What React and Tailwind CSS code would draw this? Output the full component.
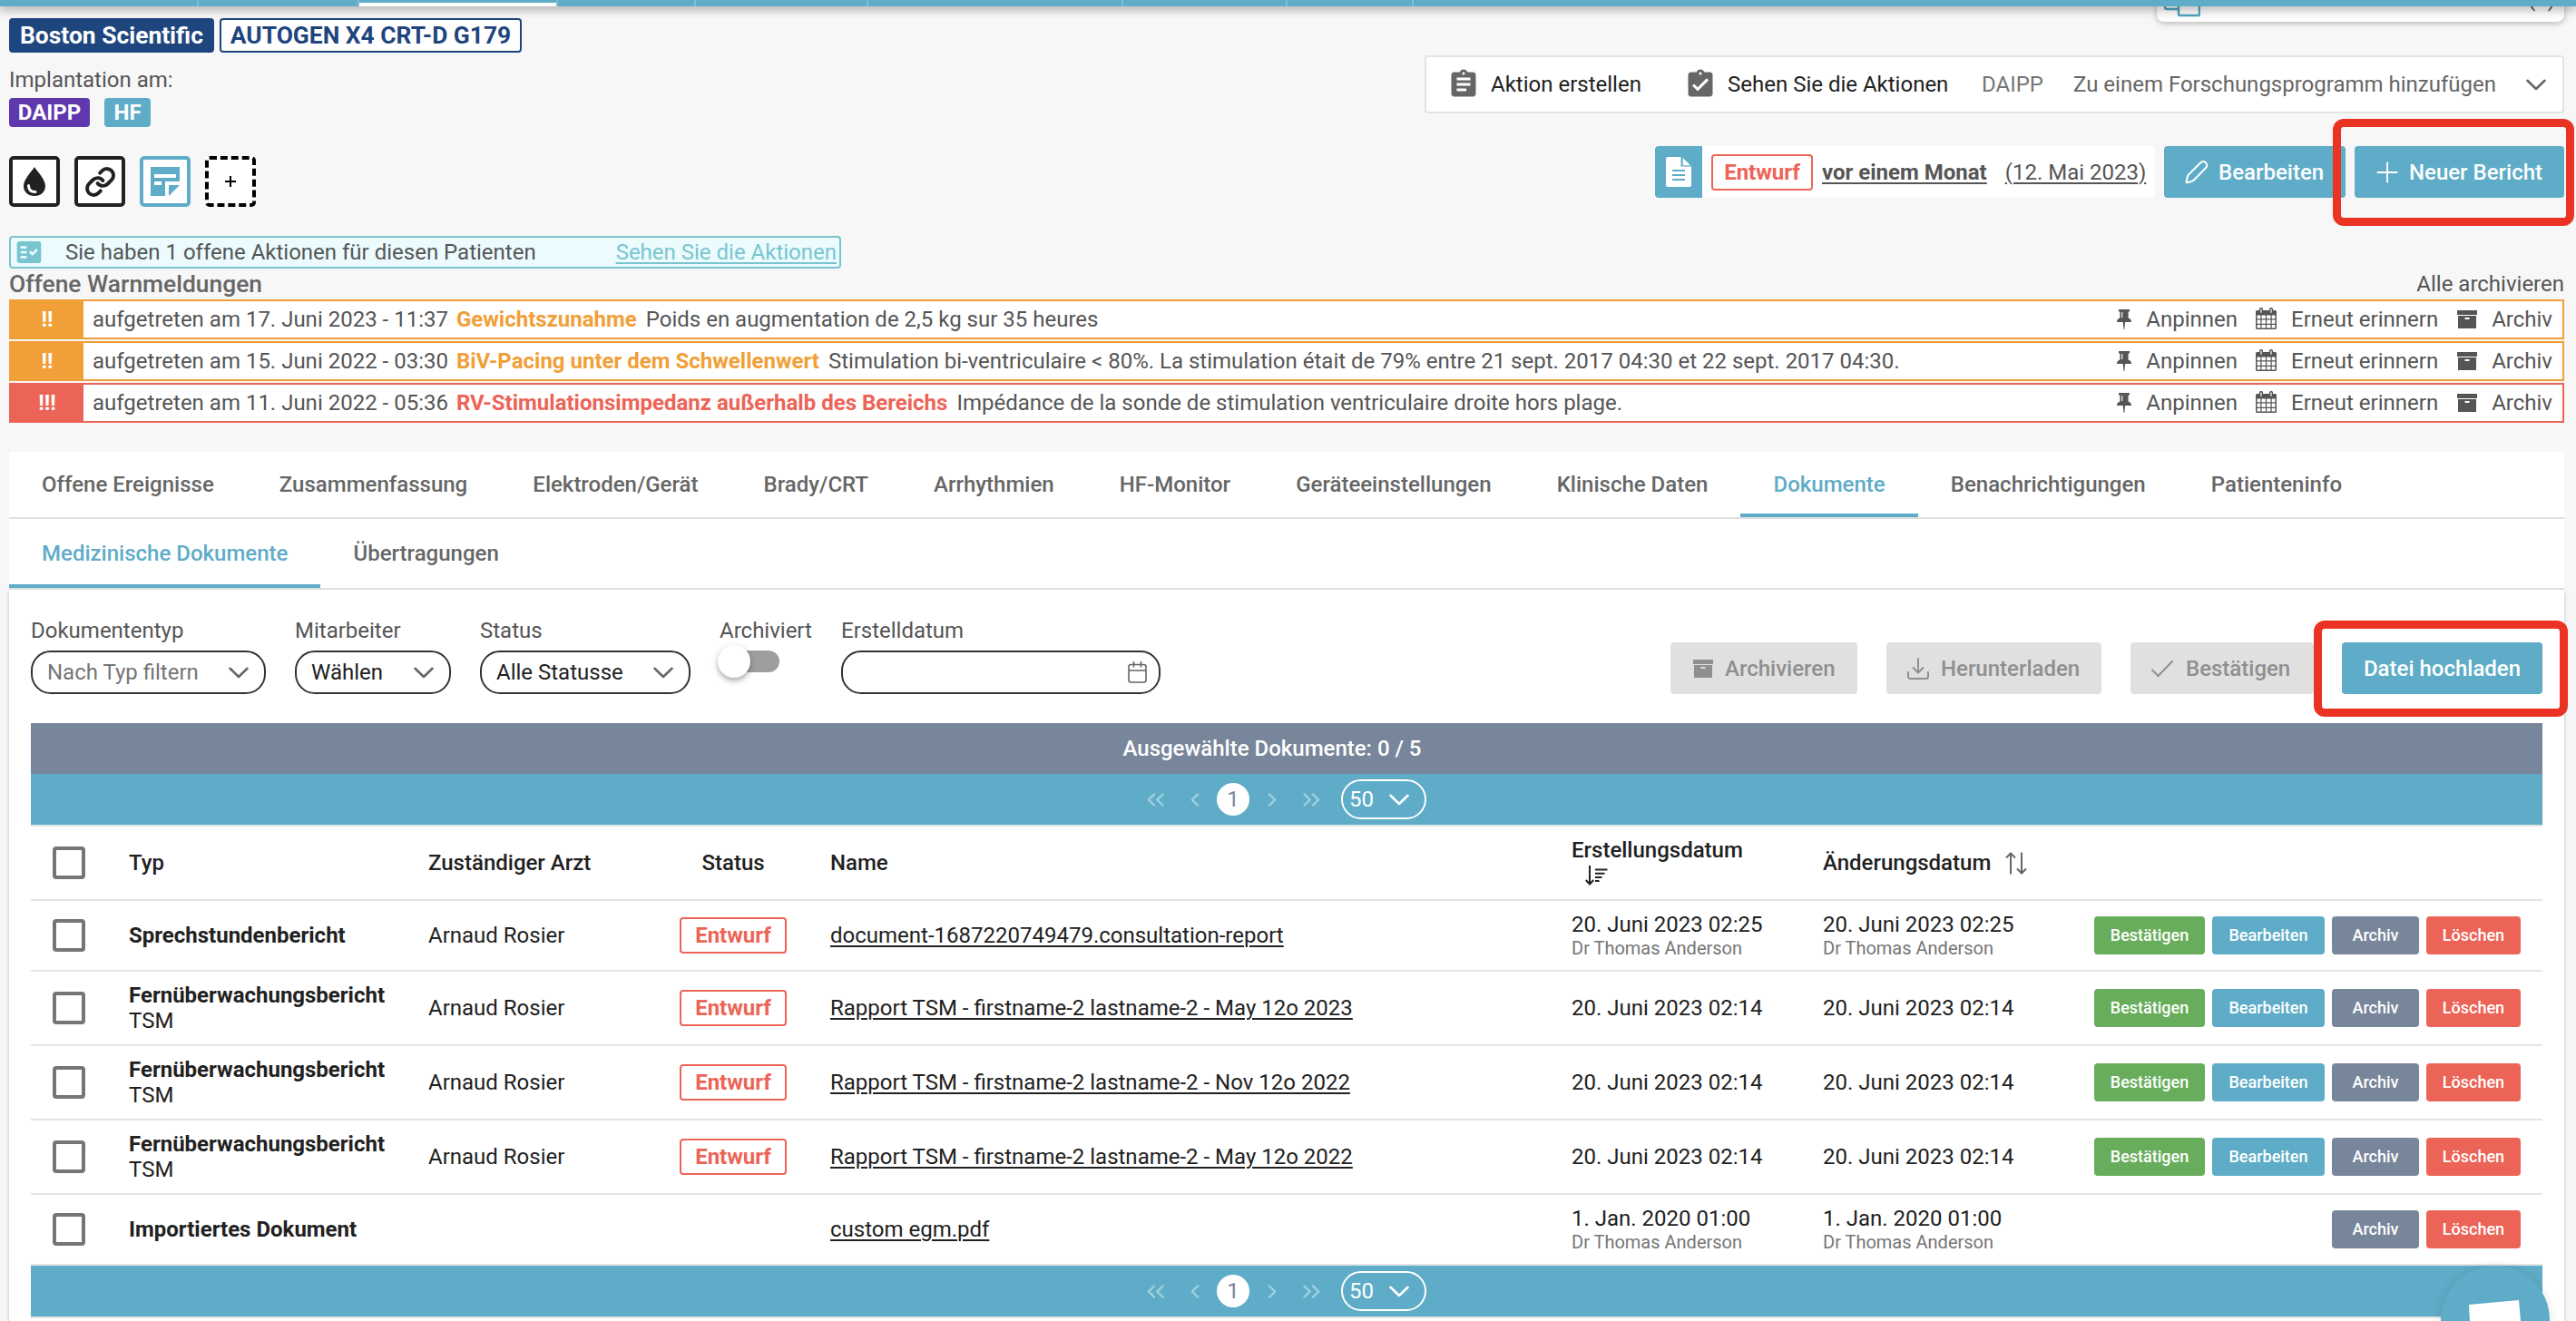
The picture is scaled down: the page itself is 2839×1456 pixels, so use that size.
import React from "react";
import { MdAssignment, MdAssignmentTurnedIn, MdFactCheck } from "react-icons/md";
import { Link } from "lucide-react";

const Chevron = ({ className = "" }) => (
  <svg viewBox="0 0 22 13" className={"h-[13px] w-[22px] shrink-0 " + className} fill="none" stroke="currentColor" strokeWidth="2.6" strokeLinecap="round" strokeLinejoin="round">
    <path d="M1.5 1.8 11 11l9.500-9.200" />
  </svg>
);

const Archive = ({ className = "" }) => (
  <svg viewBox="0 0 22 20" className={"h-5 w-[22px] shrink-0 " + className}>
    <rect width="22" height="5" fill="currentColor" />
    <path fill="currentColor" fillRule="evenodd" d="M1 6h20v14H1ZM8.500 8v2h5V8Z" />
  </svg>
);

const Pin = () => (
  <svg viewBox="0 0 16 22" className="h-[22px] w-4 shrink-0" fill="currentColor">
    <path fillRule="evenodd" d="M2 0h12v2.600h-1.400V9.400C15 10.300 16 11.800 16 14H9.100L8.300 22h-.8L6.700 14H0c0-2.200 1-3.700 3.400-4.600V2.600H2ZM5.200 3v6h1.100V3Z" />
  </svg>
);

const Calendar = () => (
  <svg viewBox="0 0 23 24" className="h-6 w-[23px] shrink-0">
    <path fill="currentColor" fillRule="evenodd" d="M1.500 3H4V1.500a1.500 1.500 0 0 1 1.500-1.500h1A1.500 1.500 0 0 1 8 1.500V3h7V1.500A1.500 1.500 0 0 1 16.500 0h1A1.500 1.500 0 0 1 19 1.500V3h2.500A1.500 1.500 0 0 1 23 4.500v18a1.500 1.500 0 0 1-1.500 1.500h-20A1.500 1.500 0 0 1 0 22.500v-18A1.500 1.500 0 0 1 1.500 3ZM5.400 1.500v4.200h1.200V1.500Zm11 0v4.200h1.200V1.500ZM1.500 8.500v3.800h3.800V8.500Zm5 0v3.800h4.400V8.500Zm5.600 0v3.800h4.400V8.500Zm5.600 0v3.800h3.800V8.500ZM1.500 13.500v4.200h3.800v-4.200Zm5 0v4.200h4.400v-4.200Zm5.600 0v4.200h4.400v-4.200Zm5.600 0v4.200h3.800v-4.200ZM1.500 18.900v3.500h3.800v-3.500Zm5 0v3.500h4.400v-3.500Zm5.600 0v3.500h4.400v-3.500Zm5.600 0v3.500h3.800v-3.500Z" />
  </svg>
);

const Alert = ({ level, when, title, text }) => {
  const severe = level === "!!!";
  return (
    <div className={"flex h-11 items-center border-2 bg-white pr-[11px] " + (severe ? "border-[#ec6457]" : "border-[#f19f38]")}>
      <div className={"flex h-full w-20 items-center justify-center font-bold text-white " + (severe ? "bg-[#ec6457]" : "bg-[#f19f38]")}>{level}</div>
      <div className="ml-2.5">aufgetreten am {when}</div>
      <div className={"ml-[9px] font-bold " + (severe ? "text-[#ec6457]" : "text-[#f19f38]")}>{title}</div>
      <div className="ml-2.5 flex-1">{text}</div>
      <Pin />
      <span className="ml-4">Anpinnen</span>
      <span className="ml-5 flex -translate-y-px"><Calendar /></span>
      <span className="ml-4">Erneut erinnern</span>
      <Archive className="ml-[21px]" />
      <span className="ml-4">Archiv</span>
    </div>
  );
};

const alerts = [
  { level: "!!", when: "17. Juni 2023 - 11:37", title: "Gewichtszunahme", text: "Poids en augmentation de 2,5 kg sur 35 heures" },
  { level: "!!", when: "15. Juni 2022 - 03:30", title: "BiV-Pacing unter dem Schwellenwert", text: "Stimulation bi-ventriculaire < 80%. La stimulation était de 79% entre 21 sept. 2017 04:30 et 22 sept. 2017 04:30." },
  { level: "!!!", when: "11. Juni 2022 - 05:36", title: "RV-Stimulationsimpedanz außerhalb des Bereichs", text: "Impédance de la sonde de stimulation ventriculaire droite hors plage." },
];

const tabs = ["Offene Ereignisse", "Zusammenfassung", "Elektroden/Gerät", "Brady/CRT", "Arrhythmien", "HF-Monitor", "Geräteeinstellungen", "Klinische Daten", "Dokumente", "Benachrichtigungen", "Patienteninfo"];

const Tabs = ({ items, active, height }) => (
  <div className={"flex border-b-2 border-[#dfdfdf] bg-white font-medium " + height}>
    {items.map((t) => (
      <div key={t} className={"flex items-center px-[36.070px] " + (t === active ? "text-[#5eacc7] shadow-[inset_0_-4px_0_#5eacc7]" : "text-[#666]")}>{t}</div>
    ))}
  </div>
);

const Field = ({ label, width, value, muted, gap }) => (
  <div className={gap}>
    <div className="leading-7">{label}</div>
    <div className={"mt-2 flex h-12 items-center justify-between rounded-[22px] border-2 border-[#333] pl-4 pr-[17px] " + width + (muted ? " text-[#757575]" : " text-[#212121]")}>
      <span>{value}</span>
      <Chevron className="text-[#666]" />
    </div>
  </div>
);

const Angles = ({ double, flip }) => (
  <svg viewBox={double ? "0 0 19 15" : "0 0 10 15"} className={(double ? "w-[19px]" : "w-2.5") + " h-[15px]" + (flip ? " -scale-x-100" : "")} fill="none" stroke="#a3d1df" strokeWidth="2.400" strokeLinecap="round" strokeLinejoin="round">
    <path d="M8 1.500 1.800 7.500 8 13.500" />
    {double && <path d="M17.500 1.500 11.300 7.500l6.200 6" />}
  </svg>
);

const Pager = () => (
  <div className="flex h-14 items-center justify-center bg-[#5eacc7] text-white">
    <Angles double />
    <span className="ml-[29px] flex"><Angles /></span>
    <span className="ml-[19px] flex size-9 items-center justify-center rounded-full bg-white text-[#78869c]">1</span>
    <span className="ml-5 flex"><Angles flip /></span>
    <span className="ml-[29px] flex"><Angles double flip /></span>
    <span className="ml-[23px] flex h-11 w-[94px] items-center justify-between rounded-[22px] border-2 border-white pl-[7px] pr-[17px]">
      50
      <Chevron />
    </span>
  </div>
);

const Checkbox = () => <div className="ml-6 size-9 rounded-[4px] border-4 border-[#757575] bg-white" />;
const grid = "grid grid-cols-[108px_330px_277px_166px_817px_277px_278px_1fr] items-center border-b-2 border-[#e3e4e4] bg-white text-[#212121] ";

const ActionButton = ({ children, style }) => (
  <div className={"flex h-[42px] items-center justify-center rounded-[4px] text-[18px] font-medium text-white " + style}>{children}</div>
);

const Stamp = ({ date, doctor }) => (
  <div>
    <div className="leading-7">{date}</div>
    {doctor && <div className="text-[20px] leading-6 text-[#757575]">Dr Thomas Anderson</div>}
  </div>
);

const docs = [
  { type: "Sprechstundenbericht", name: "document-1687220749479.consultation-report", date: "20. Juni 2023 02:25", doctor: true, draft: true },
  { type: "Fernüberwachungsbericht", sub: "TSM", name: "Rapport TSM - firstname-2 lastname-2 - May 12o 2023", date: "20. Juni 2023 02:14", draft: true },
  { type: "Fernüberwachungsbericht", sub: "TSM", name: "Rapport TSM - firstname-2 lastname-2 - Nov 12o 2022", date: "20. Juni 2023 02:14", draft: true },
  { type: "Fernüberwachungsbericht", sub: "TSM", name: "Rapport TSM - firstname-2 lastname-2 - May 12o 2022", date: "20. Juni 2023 02:14", draft: true },
  { type: "Importiertes Dokument", name: "custom egm.pdf", date: "1. Jan. 2020 01:00", doctor: true },
];

const DocRow = ({ d }) => (
  <div className={grid + (d.sub ? "h-[82px]" : "h-[78px]")}>
    <Checkbox />
    <div className="leading-7">
      <div className="font-bold">{d.type}</div>
      {d.sub && <div>{d.sub}</div>}
    </div>
    <div>{d.draft && "Arnaud Rosier"}</div>
    <div>
      {d.draft && <div className="flex h-10 w-[118px] items-center justify-center rounded-[4px] border-2 border-[#ec6457] font-bold text-[#ec6457]">Entwurf</div>}
    </div>
    <div className="underline decoration-2 underline-offset-[3px]">{d.name}</div>
    <Stamp date={d.date} doctor={d.doctor} />
    <Stamp date={d.date} doctor={d.doctor} />
    <div className="flex justify-end gap-2 pr-6">
      {d.draft && <ActionButton style="w-[122px] bg-[#67ad5b]">Bestätigen</ActionButton>}
      {d.draft && <ActionButton style="w-[124px] bg-[#5eacc7]">Bearbeiten</ActionButton>}
      <ActionButton style="w-24 bg-[#78869c]">Archiv</ActionButton>
      <ActionButton style="w-[104px] bg-[#ec6457]">Löschen</ActionButton>
    </div>
  </div>
);

const navWidths = ["w-[219px]", "w-[177px]", "w-[219px]", "w-[152px]", "w-[190px]", "w-[281px]", "w-[181px]", "w-[139px]"];
const square = "flex size-14 items-center justify-center rounded-[5px] border-4 bg-white ";
const disabled = "flex h-[57px] items-center rounded-[4px] bg-[#e0e0e0] pl-[25px] font-medium text-[#8f8f8f] ";

export default function App() {
  return (
    <div className="relative h-[1456px] w-[2839px] overflow-hidden bg-[#f7f7f7] font-['Roboto',sans-serif] text-[24px] leading-none text-[#555]">
      <header className="relative z-10 flex h-[7px] bg-[#5eacc7] shadow-[0_2px_12px_1px_rgba(0,0,0,0.36)]">
        {navWidths.map((w, i) => (
          <div key={i} className={"h-full shrink-0 border-r-2 border-[#7fbdd3] " + w}>
            {i === 2 && <div className="h-full border-t-[3px] border-[#5eacc7] bg-white" />}
          </div>
        ))}
      </header>

      <div className="pl-2.5 pr-[13px]">
        <section className="flex h-[253px] justify-between">
          <div className="pt-[13px]">
            <div className="flex gap-1.5 text-[26.4px] font-bold">
              <div className="flex h-[38px] w-[226px] items-center justify-center rounded-[4px] bg-[#1e457d] text-white">Boston Scientific</div>
              <div className="flex h-[38px] w-[333px] items-center justify-center rounded-[4px] border-2 border-[#1e457d] bg-white text-[#1e457d]">AUTOGEN X4 CRT-D G179</div>
            </div>
            <div className="mt-4 leading-7">Implantation am:</div>
            <div className="mt-1.5 flex gap-4 font-bold text-white">
              <div className="flex h-8 w-[89px] items-center justify-center rounded-[4px] bg-[#5f38ad]">DAIPP</div>
              <div className="flex h-8 w-[51px] items-center justify-center rounded-[4px] bg-[#5eacc7]">HF</div>
            </div>
            <div className="mt-8 flex gap-4">
              <div className={square + "border-[#212121]"}>
                <svg viewBox="0 0 24 32" className="h-8 w-6">
                  <path d="M12 0C10 4 0 13 0 21c0 6.500 5 11 12 11s12-4.500 12-11C24 13 14 4 12 0Z" fill="#212121" />
                  <path d="M5.500 20.500c0 4.500 2.500 7 7.500 7" fill="none" stroke="#fff" strokeWidth="3" strokeLinecap="round" />
                </svg>
              </div>
              <div className={square + "border-[#212121]"}><Link size={35} strokeWidth={2.7} className="text-[#212121]" /></div>
              <div className={square + "border-[#5eacc7]"}>
                <svg viewBox="0 0 32 32" className="size-8" fill="#5eacc7">
                  <path fillRule="evenodd" d="M0 0h32v16H16v16H0ZM4 8v4h24V8ZM4 16v4h8v-4Z" />
                  <path d="M20 20h12L20 32Z" />
                </svg>
              </div>
              <div className={square + "border-dashed border-black"}>
                <svg viewBox="0 0 12 12" className="size-3" stroke="#000" strokeWidth="2"><path d="M6 0v12M0 6h12" /></svg>
              </div>
            </div>
          </div>

          <div className="flex flex-col items-end">
            <div className="-mt-[23px] flex h-10 w-[449px] items-end justify-between rounded-b-[8px] bg-white pl-2 pr-2.5 shadow-[0_2px_6px_rgba(0,0,0,0.25)]">
              <svg viewBox="0 0 40 40" className="mb-[5px] size-10" fill="none" stroke="#4fa5c2" strokeWidth="2.500">
                <path d="M15 31H3a2 2 0 0 1-2-2V3a2 2 0 0 1 2-2h26v10" />
                <rect x="16" y="11" width="23" height="27" rx="1" />
              </svg>
              <span className="mb-[13px]">(1)</span>
            </div>
            <div className="mt-[37px] flex h-16 w-[1256px] items-center rounded-[4px] border-2 border-[#e3e3e3] bg-white text-[#212121]">
              <MdAssignment className="ml-[23px] size-9 text-[#666]" />
              <span className="ml-3 w-[206px]">Aktion erstellen</span>
              <MdAssignmentTurnedIn className="ml-[7px] size-9 text-[#666]" />
              <span className="ml-3 w-[268px]">Sehen Sie die Aktionen</span>
              <span className="ml-3 w-[101px] text-[#757575]">DAIPP</span>
              <span className="flex-1 text-[#666]">Zu einem Forschungsprogramm hinzufügen</span>
              <Chevron className="mr-[18px] text-[#666]" />
            </div>
            <div className="mt-9 flex h-[57px] items-center">
              <div className="flex h-full w-[551px] items-center rounded-[4px] bg-white">
                <div className="flex h-full w-[52px] items-center justify-center rounded-l-[4px] bg-[#5eacc7]">
                  <svg viewBox="0 0 28 33" className="h-[33px] w-7" fill="#fff">
                    <path fillRule="evenodd" d="M2 0h14.500v10.500H28V31a2 2 0 0 1-2 2H2a2 2 0 0 1-2-2V2a2 2 0 0 1 2-2ZM7 14v2h14v-2Zm0 5v2h14v-2Zm0 5v2h14v-2Z" />
                    <path d="M18.700 1 27 9.300h-8.300Z" />
                  </svg>
                </div>
                <div className="ml-2.5 flex h-10 w-28 items-center justify-center rounded-[4px] border-2 border-[#ec6457] font-bold text-[#ec6457]">Entwurf</div>
                <span className="ml-2.5 font-bold underline decoration-2 underline-offset-[3px]">vor einem Monat</span>
                <span className="ml-5 underline decoration-2 underline-offset-[3px]">(12. Mai 2023)</span>
              </div>
              <div className="ml-2.5 flex h-full w-[200px] items-center rounded-[4px] bg-[#5eacc7] pl-[23px] font-medium text-white">
                <svg viewBox="0 0 26 26" className="size-[26px]" fill="none" stroke="currentColor" strokeWidth="2" strokeLinejoin="round">
                  <path d="M1.500 23.500 3 17.300c.2-.8.5-1.300 1-1.800L17.300 2.300c3.900-3.600 9.300 1.900 5.700 5.700L9.900 21.500c-.6.600-1.100.9-1.900 1.100l-5.300 1.600c-.8.200-1.400-.1-1.200-.7Z" />
                </svg>
                <span className="ml-[11px]">Bearbeiten</span>
              </div>
              <div className="relative ml-2.5 flex h-full w-[231px] items-center rounded-[4px] bg-[#5eacc7] pl-6 font-medium text-white">
                <svg viewBox="0 0 24 24" className="size-6" stroke="currentColor" strokeWidth="2" strokeLinecap="round"><path d="M12 1.500v21M1.500 12h21" /></svg>
                <span className="ml-3">Neuer Bericht</span>
                <div className="absolute -left-6 -top-[30px] h-[118px] w-[266px] rounded-[12px] border-[9px] border-[#eb3323]" />
              </div>
            </div>
          </div>
        </section>

        <div className="flex h-9 w-[917px] items-center rounded-[4px] border-2 border-[#79c5cf] bg-[#ebfbfe]">
          <MdFactCheck className="ml-1 size-8 text-[#79c5cf]" />
          <span className="ml-6 flex-1">Sie haben 1 offene Aktionen für diesen Patienten</span>
          <span className="mr-[3px] text-[#79c5cf] underline decoration-2 underline-offset-[3px]">Sehen Sie die Aktionen</span>
        </div>
        <div className="flex h-[34px] items-center justify-between">
          <span className="text-[26.4px] font-medium text-[#666]">Offene Warnmeldungen</span>
          <span>Alle archivieren</span>
        </div>
        <div className="flex flex-col gap-0.5">
          {alerts.map((a) => <Alert key={a.when} {...a} />)}
        </div>

        <div className="mt-8">
          <Tabs items={tabs} active="Dokumente" height="h-[74px]" />
          <Tabs items={["Medizinische Dokumente", "Übertragungen"]} active="Medizinische Dokumente" height="h-[78px]" />
        </div>

        <section className="h-[830px] bg-white px-6 pt-[31px] shadow-[0_3px_4px_rgba(0,0,0,0.25)]">
          <div className="flex h-[84px] items-end">
            <Field label="Dokumententyp" width="w-[259px]" value="Nach Typ filtern" muted />
            <Field gap="ml-8" label="Mitarbeiter" width="w-[172px]" value="Wählen" />
            <Field gap="ml-8" label="Status" width="w-[232px]" value="Alle Statusse" />
            <div className="ml-8 w-[134px]">
              <div className="leading-7">Archiviert</div>
              <div className="mt-2 flex h-12">
                <div className="ml-[10px] h-6 w-14 rounded-full bg-[#9e9e9e]">
                  <div className="-ml-3 -mt-1.5 size-9 rounded-full bg-white shadow-[0_3px_6px_rgba(0,0,0,0.35)]" />
                </div>
              </div>
            </div>
            <div className="flex-1">
              <div className="leading-7">Erstelldatum</div>
              <div className="mt-2 flex h-12 w-[352px] items-center justify-end rounded-[22px] border-2 border-[#333] pr-[13px]">
                <svg viewBox="0 0 21 24" className="h-6 w-[21px]" fill="none" stroke="#666" strokeWidth="1.600">
                  <rect x="1" y="3.500" width="19" height="19.500" rx="2.500" />
                  <path d="M1 10h19M6.500 0v6.500M14.500 0v6.500" />
                </svg>
              </div>
            </div>
            <div className={disabled + "w-[206px]"}><Archive /><span className="ml-[13px]">Archivieren</span></div>
            <div className={disabled + "ml-8 w-[237px]"}>
              <svg viewBox="0 0 24 24" className="-ml-0.5 size-6" fill="none" stroke="currentColor" strokeWidth="2" strokeLinecap="round" strokeLinejoin="round">
                <path d="M12 1v15M6.500 11l5.500 5.500 5.500-5.500M1 16v4.500A2.500 2.500 0 0 0 3.500 23h17a2.500 2.500 0 0 0 2.500-2.500V16" />
              </svg>
              <span className="ml-[13px]">Herunterladen</span>
            </div>
            <div className={disabled + "ml-8 w-[202px]"}>
              <svg viewBox="0 0 24 20" className="-ml-0.5 h-5 w-6" fill="none" stroke="currentColor" strokeWidth="2" strokeLinecap="round"><path d="M1 11.500 7.500 18 23 2" /></svg>
              <span className="ml-3.5">Bestätigen</span>
            </div>
            <div className="relative ml-[31px] flex h-[57px] w-[221px] items-center justify-center rounded-[4px] bg-[#5eacc7] font-medium text-white">
              Datei hochladen
              <div className="absolute -left-[31px] -top-6 h-[106px] w-[280px] rounded-[12px] border-[9px] border-[#eb3323]" />
            </div>
          </div>

          <div className="mt-8">
            <div className="flex h-14 items-center justify-center bg-[#78869c] pr-8 font-medium text-white">Ausgewählte Dokumente: 0 / 5</div>
            <div className="border-b-2 border-[#e3e4e4]"><Pager /></div>
            <div className={grid + "h-[82px] font-medium"}>
              <Checkbox />
              <div>Typ</div>
              <div>Zuständiger Arzt</div>
              <div className="w-[118px] text-center">Status</div>
              <div>Name</div>
              <div className="leading-7">
                <div>Erstellungsdatum</div>
                <div className="flex h-7 items-center">
                  <svg viewBox="0 0 25 22" className="ml-[15px] h-[22px] w-[25px]" fill="none" stroke="#212121" strokeWidth="2">
                    <path d="M5 0v20M.8 16 5 20.500 9.200 16M11 4.500h13.500M11 8.700h10.500M11 12.900h7.500M11 17.100h4.500" />
                  </svg>
                </div>
              </div>
              <div className="flex items-center">
                Änderungsdatum
                <svg viewBox="0 0 24 25" className="ml-4 h-[25px] w-6" fill="none" stroke="#666" strokeWidth="2">
                  <path d="M6 24.500V1.500M1 6.500l5-5 5 5M18 .5v23M13 18.500l5 5 5-5" />
                </svg>
              </div>
            </div>
            {docs.map((d, i) => <DocRow key={i} d={d} />)}
            <div className="border-b-2 border-[#e3e4e4]"><Pager /></div>
          </div>
        </section>
      </div>

      <div className="absolute left-[2690px] top-[1395px] size-[120px] rounded-full bg-[#5eacc7] shadow-[0_2px_12px_rgba(0,0,0,0.12)]">
        <svg viewBox="0 0 120 120" className="size-[120px]"><path d="M31 43 86 38 90 84 66 82 60 92 52 82 33 80Z" fill="#fff" /></svg>
      </div>
    </div>
  );
}
